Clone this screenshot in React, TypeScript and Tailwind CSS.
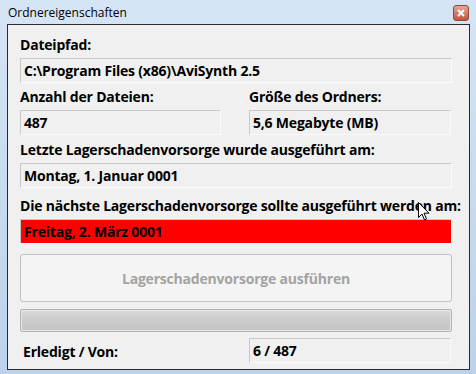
import React from "react";

const font = { fontFamily: '"Open Sans", "Noto Sans", sans-serif' };

const Field = (props: { children?: React.ReactNode; className?: string }) => {
  return (
    <div
      className={
        "flex items-center h-[25px] pl-[3px] border border-t-[#c9c9c9] border-l-[#c9c9c9] border-r-[#fbfbfb] border-b-[#fbfbfb] text-[14px] font-bold tracking-[-0.2px] text-black " +
        (props.className || "bg-[#f0f0f0]")
      }
    >
      {props.children}
    </div>
  );
};

const Label = (props: { children: React.ReactNode }) => {
  return (
    <div className="h-[20px] leading-[20px] text-[14px] font-bold tracking-[-0.2px] text-black whitespace-nowrap">
      {props.children}
    </div>
  );
};

const App = () => {
  return (
    <div
      style={font}
      className="relative w-[476px] h-[374px] flex flex-col bg-gradient-to-b from-[#d6e5f5] via-[#c8dbef] to-[#bcd2ec] overflow-hidden"
    >
      {/* title bar */}
      <div className="h-[24px] flex items-start justify-between pl-[8px] pr-[7px] pt-[5px]">
        <span className="text-[12px] leading-[15px] text-black">Ordnereigenschaften</span>
        <div className="w-[16px] h-[16px] rounded-[3px] border border-[#8a4a3e] bg-gradient-to-b from-[#e6a394] to-[#c2553f] flex items-center justify-center">
          <svg width="8" height="8" viewBox="0 0 8 8">
            <path d="M1 1 L7 7 M7 1 L1 7" stroke="white" strokeWidth="2" />
          </svg>
        </div>
      </div>

      {/* client area */}
      <div className="ml-[7px] mr-[6px] w-[463px] h-[346px] border border-[#2a2a2a] bg-[#f0f0f0] pl-[12px] pr-[17px] flex flex-col">
        <div className="mt-[10px]">
          <Label>Dateipfad:</Label>
        </div>
        <div className="mt-[3px]">
          <Field>C:\Program Files (x86)\AviSynth 2.5</Field>
        </div>

        <div className="mt-[4px] grid grid-cols-[201px_202px] gap-x-[28px]">
          <Label>Anzahl der Dateien:</Label>
          <Label>Größe des Ordners:</Label>
          <div className="mt-[3px]">
            <Field>487</Field>
          </div>
          <div className="mt-[3px]">
            <Field>5,6 Megabyte (MB)</Field>
          </div>
        </div>

        <div className="mt-[5px]">
          <Label>Letzte Lagerschadenvorsorge wurde ausgeführt am:</Label>
        </div>
        <div className="mt-[3px]">
          <Field>Montag, 1. Januar 0001</Field>
        </div>

        <div className="mt-[8px]">
          <Label>Die nächste Lagerschadenvorsorge sollte ausgeführt werden am:</Label>
        </div>
        <div className="mt-[3px]">
          <Field className="bg-[#ff0000] h-[24px]">Freitag, 2. März 0001</Field>
        </div>

        <button className="mt-[10px] h-[48px] rounded-[3px] border border-[#c2c2c2] bg-[#f4f4f4] text-[14px] font-bold tracking-[-0.2px] text-[#a3a3a3]">
          Lagerschadenvorsorge ausführen
        </button>

        <div className="mt-[7px] h-[23px] rounded-[2px] border border-[#b2b2b2] bg-[#e6e6e6] p-[1px]">
          <div className="h-full rounded-[1px] bg-gradient-to-b from-[#d9d9d9] via-[#cbcbcb] to-[#c4c4c4]" />
        </div>

        <div className="mt-[6px] grid grid-cols-[201px_202px] gap-x-[28px] items-center">
          <div className="pl-[3px] pt-[2px]">
            <Label>Erledigt / Von:</Label>
          </div>
          <Field className="bg-[#f0f0f0] h-[24px]">6 / 487</Field>
        </div>
      </div>

      {/* mouse cursor */}
      <svg className="absolute left-[418px] top-[202px]" width="12" height="19" viewBox="0 0 12 19">
        <path
          d="M0.5 0.5 L0.5 15.5 L4 12 L6.5 18 L8.5 17 L6 11.2 L11 11.2 Z"
          fill="white"
          stroke="black"
          strokeWidth="1"
        />
      </svg>
    </div>
  );
};

export default App;
